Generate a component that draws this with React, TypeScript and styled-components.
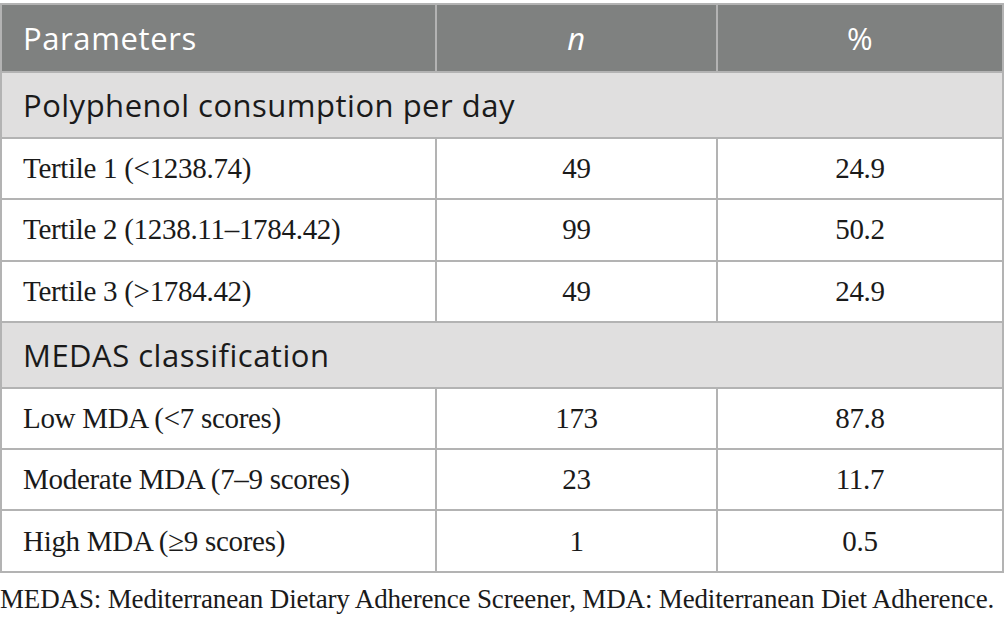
import React from 'react';
import styled, { createGlobalStyle } from 'styled-components';

const GlobalStyle = createGlobalStyle`
  html, body {
    margin: 0;
    padding: 0;
    background: #ffffff;
  }
`;

type Row = { label: string; n: string; pct: string };
type Section = { title: string; rows: Row[] };

const sections: Section[] = [
  {
    title: 'Polyphenol consumption per day',
    rows: [
      { label: 'Tertile 1 (<1238.74)', n: '49', pct: '24.9' },
      { label: 'Tertile 2 (1238.11–1784.42)', n: '99', pct: '50.2' },
      { label: 'Tertile 3 (>1784.42)', n: '49', pct: '24.9' },
    ],
  },
  {
    title: 'MEDAS classification',
    rows: [
      { label: 'Low MDA (<7 scores)', n: '173', pct: '87.8' },
      { label: 'Moderate MDA (7–9 scores)', n: '23', pct: '11.7' },
      { label: 'High MDA (≥9 scores)', n: '1', pct: '0.5' },
    ],
  },
];

const App: React.FC = () => {
  return (
    <>
      <GlobalStyle />
      <Page>
        <Table>
          <colgroup>
            <col style={{ width: 435 }} />
            <col style={{ width: 281 }} />
            <col />
          </colgroup>
          <thead>
            <tr>
              <HeadCell $align="left">Parameters</HeadCell>
              <HeadCell>
                <em>n</em>
              </HeadCell>
              <HeadCell>%</HeadCell>
            </tr>
          </thead>
          <tbody>
            {sections.map((section) => (
              <React.Fragment key={section.title}>
                <tr>
                  <SectionCell colSpan={3}>{section.title}</SectionCell>
                </tr>
                {section.rows.map((row) => (
                  <tr key={row.label}>
                    <DataCell $align="left">{row.label}</DataCell>
                    <DataCell>{row.n}</DataCell>
                    <DataCell>{row.pct}</DataCell>
                  </tr>
                ))}
              </React.Fragment>
            ))}
          </tbody>
        </Table>
        <Footnote>
          MEDAS: Mediterranean Dietary Adherence Screener, MDA: Mediterranean Diet Adherence.
        </Footnote>
      </Page>
    </>
  );
};

const Page = styled.div`
  width: 1005px;
  padding-top: 3px;
`;

const Table = styled.table`
  width: 1004px;
  border-collapse: collapse;
  table-layout: fixed;
`;

const HeadCell = styled.th<{ $align?: 'left' | 'center' }>`
  height: 68px;
  padding: 0 21px;
  box-sizing: border-box;
  background: #7f8180;
  color: #ffffff;
  font-family: 'Open Sans', 'Noto Sans', sans-serif;
  font-weight: 400;
  font-size: 31px;
  letter-spacing: 0.6px;
  text-align: ${({ $align }) => $align || 'center'};
  border: 2px solid #b3b3b3;

  em {
    font-style: italic;
  }
`;

const SectionCell = styled.td`
  height: 66px;
  padding: 0 21px;
  box-sizing: border-box;
  background: #e0dfdf;
  color: #1a1a1a;
  font-family: 'Open Sans', 'Noto Sans', sans-serif;
  font-size: 31px;
  letter-spacing: 0.5px;
  text-align: left;
  border: 2px solid #b3b3b3;
`;

const DataCell = styled.td<{ $align?: 'left' | 'center' }>`
  height: 61.3px;
  padding: 0 21px;
  box-sizing: border-box;
  background: #ffffff;
  color: #1a1a1a;
  font-family: 'Liberation Serif', 'Times New Roman', serif;
  font-size: 29px;
  letter-spacing: -0.3px;
  text-align: ${({ $align }) => $align || 'center'};
  border: 2px solid #b3b3b3;
`;

const Footnote = styled.p`
  margin: 11px 0 0;
  font-family: 'Liberation Serif', 'Times New Roman', serif;
  font-size: 27px;
  color: #1a1a1a;
  white-space: nowrap;
  letter-spacing: -0.15px;
`;

export default App;
